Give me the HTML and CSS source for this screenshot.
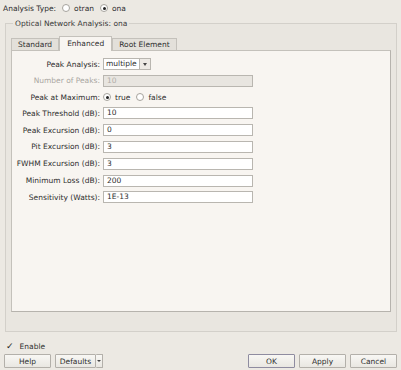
FILE: index.html
```html
<!DOCTYPE html>
<html lang="en">
<head>
  <meta charset="UTF-8" />
  <title>Analysis</title>
  <link rel="stylesheet" href="styles.css">
</head>
<body>
  <div class="type-row">
    <span>Analysis Type:</span>
    <label class="radio"><span class="dot"></span>otran</label>
    <label class="radio"><span class="dot on"></span>ona</label>
  </div>

  <fieldset class="group">
    <legend>Optical Network Analysis: ona</legend>
    <div class="tabs">
      <div class="tab">Standard</div>
      <div class="tab active">Enhanced</div>
      <div class="tab">Root Element</div>
    </div>
    <div class="pane">
      <div class="form">
        <label>Peak Analysis:</label>
        <div class="combo"><span class="combo-value">multiple</span><span class="combo-arrow"></span></div>

        <label class="disabled">Number of Peaks:</label>
        <div class="field disabled">10</div>

        <label>Peak at Maximum:</label>
        <div class="radios">
          <label class="radio"><span class="dot on"></span>true</label>
          <label class="radio"><span class="dot"></span>false</label>
        </div>

        <label>Peak Threshold (dB):</label>
        <div class="field">10</div>

        <label>Peak Excursion (dB):</label>
        <div class="field">0</div>

        <label>Pit Excursion (dB):</label>
        <div class="field">3</div>

        <label>FWHM Excursion (dB):</label>
        <div class="field">3</div>

        <label>Minimum Loss (dB):</label>
        <div class="field">200</div>

        <label>Sensitivity (Watts):</label>
        <div class="field">1E-13</div>
      </div>
    </div>
  </fieldset>

  <div class="enable-row">
    <span class="check">&#x2713;</span>
    <span>Enable</span>
  </div>

  <div class="buttons">
    <button class="btn">Help</button>
    <div class="split">
      <button class="btn defaults">Defaults</button>
      <button class="btn arrow"><span class="combo-arrow small"></span></button>
    </div>
    <div class="spacer"></div>
    <button class="btn default">OK</button>
    <button class="btn">Apply</button>
    <button class="btn">Cancel</button>
  </div>
</body>
</html>
```

FILE: styles.css
```css
body {
  margin: 0;
  width: 401px;
  height: 370px;
  background: #ece9e3;
  font-family: 'DejaVu Sans', sans-serif;
  font-size: 7.5px;
  color: #2e2e2e;
  overflow: hidden;
}
.type-row {
  display: flex;
  align-items: center;
  gap: 6px;
  height: 14px;
  padding: 1px 0 0 3px;
}
.radio {
  display: flex;
  align-items: center;
  gap: 4px;
}
.dot {
  width: 8px;
  height: 8px;
  box-sizing: border-box;
  border: 1px solid #a6a39d;
  border-radius: 50%;
  background: #fff;
  position: relative;
}
.dot.on::after {
  content: '';
  position: absolute;
  left: 1.5px;
  top: 1.5px;
  width: 3px;
  height: 3px;
  border-radius: 50%;
  background: #222;
}
.group {
  margin: 4px 4px 0 5px;
  padding: 8px 5px 16px 5px;
  height: 287px;
  border: 1px solid #d3d0ca;
  background: #e9e6e0;
}
.group legend {
  padding: 0 2px;
  margin-left: 2px;
  color: #3a3a3a;
}
.tabs {
  display: flex;
  align-items: flex-end;
  height: 14px;
}
.tab {
  height: 11px;
  line-height: 11px;
  padding: 0 6px;
  border: 1px solid #c4c1bb;
  border-bottom: none;
  background: #e3e0da;
}
.tab + .tab {
  border-left: none;
}
.tab.active {
  height: 14px;
  line-height: 13px;
  padding: 0 7px;
  background: #f8f5f1;
  border-left: 1px solid #c4c1bb;
  margin-bottom: -1px;
  position: relative;
}
.tab.active + .tab {
  border-left: 1px solid #c4c1bb;
}
.pane {
  height: 253px;
  border: 1px solid #c4c1bb;
  border-right-color: #b6b3ad;
  border-bottom-color: #b6b3ad;
  background: #f8f5f1;
  padding-top: 7px;
}
.form {
  display: grid;
  grid-template-columns: 88px 150px;
  column-gap: 3px;
  row-gap: 4.8px;
  align-items: center;
}
.form > label {
  text-align: right;
}
.form > label.disabled {
  color: #a9a6a1;
}
.field {
  height: 12px;
  box-sizing: border-box;
  border: 1px solid #b9b6b0;
  background: #fff;
  padding: 0 3px;
  line-height: 10px;
}
.field.disabled {
  background: #e8e5e0;
  color: #b0ada8;
}
.combo {
  display: flex;
  height: 12px;
  width: 48px;
}
.combo-value {
  width: 37px;
  box-sizing: border-box;
  border: 1px solid #b9b6b0;
  background: #fff;
  padding: 0 2px;
  line-height: 10px;
}
.combo .combo-arrow {
  width: 11px;
  box-sizing: border-box;
  border: 1px solid #b9b6b0;
  border-left: none;
  background: #edeae5;
  position: relative;
}
.combo-arrow::after {
  content: '';
  position: absolute;
  left: 3px;
  top: 4px;
  border-left: 2.5px solid transparent;
  border-right: 2.5px solid transparent;
  border-top: 3px solid #444;
}
.radios {
  display: flex;
  gap: 6px;
  height: 11px;
}
.enable-row {
  display: flex;
  align-items: center;
  gap: 6px;
  height: 12px;
  margin: 8px 0 0 6px;
}
.check {
  font-size: 9px;
  font-weight: bold;
  color: #222;
}
.buttons {
  display: flex;
  align-items: center;
  gap: 4px;
  margin: 2px 4px 0 4px;
}
.spacer {
  flex: 1;
}
.btn {
  height: 14px;
  width: 47px;
  padding: 0;
  font-family: inherit;
  font-size: 7.5px;
  color: #2e2e2e;
  border: 1px solid #b3b0aa;
  border-radius: 1px;
  background: linear-gradient(#f8f7f4, #e9e7e2);
}
.btn.default {
  border-color: #8f8ca0;
}
.split {
  display: flex;
}
.btn.defaults {
  width: 41px;
}
.btn.arrow {
  width: 7px;
  border-left: none;
  position: relative;
}
.combo-arrow.small::after {
  left: 1px;
  top: 5px;
  border-left-width: 2px;
  border-right-width: 2px;
  border-top-width: 2.5px;
}
```
